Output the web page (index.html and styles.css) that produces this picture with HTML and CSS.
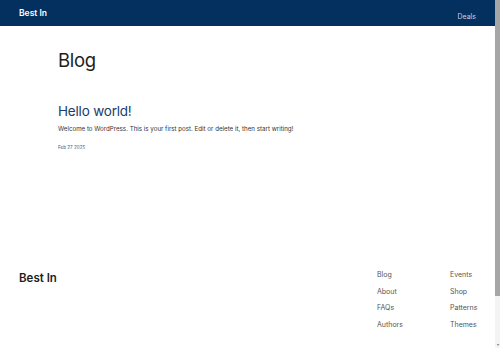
FILE: index.html
```html
<!DOCTYPE html>
<html>
    <head>
        <meta charset="UTF-8" name="viewport" content="width=device-width, initial-scale=1">
        <link rel="stylesheet" href="styles.css">
    </head>
    <body>

        <header class="topbar">
            <a class="brand" href="#">Best In</a>
            <nav class="topnav">
                <a href="#">Deals</a>
            </nav>
        </header>

        <main class="content">
            <h1 class="page-title">Blog</h1>

            <article class="post">
                <h2 class="post-title"><a href="#">Hello world!</a></h2>
                <p class="post-excerpt">Welcome to WordPress. This is your first post. Edit or delete it, then start writing!</p>
                <time class="post-date">Feb 27 2025</time>
            </article>
        </main>

        <footer class="site-footer">
            <div class="footer-brand">Best In</div>
            <div class="footer-links">
                <ul>
                    <li><a href="#">Blog</a></li>
                    <li><a href="#">About</a></li>
                    <li><a href="#">FAQs</a></li>
                    <li><a href="#">Authors</a></li>
                </ul>
                <ul>
                    <li><a href="#">Events</a></li>
                    <li><a href="#">Shop</a></li>
                    <li><a href="#">Patterns</a></li>
                    <li><a href="#">Themes</a></li>
                </ul>
            </div>
        </footer>

        <div class="scrollbar"><div class="scrollbar-thumb"></div><div class="scrollbar-arrow">&#9662;</div></div>

    </body>
</html>
```

FILE: styles.css
```css
body {
    margin: 0;
    padding-right: 5px;
    font-family: Inter, "Noto Sans", sans-serif;
    color: #222;
    background: #fff;
}

a {
    color: inherit;
    text-decoration: none;
}

/* Fake scrollbar on the right edge */
.scrollbar {
    position: fixed;
    top: 0;
    right: 0;
    width: 5px;
    height: 100%;
    background: #f4f4f4;
}

.scrollbar-thumb {
    height: 296px;
    background: #a6a6a6;
}

.scrollbar-arrow {
    position: absolute;
    bottom: 1px;
    left: 0;
    width: 5px;
    font-size: 4px;
    line-height: 5px;
    text-align: center;
    color: #777;
}

/* Top bar */
.topbar {
    display: flex;
    justify-content: space-between;
    align-items: center;
    height: 26px;
    padding: 0 19px;
    background-color: #03305f;
}

.brand {
    color: #fff;
    font-size: 8.5px;
    font-weight: 600;
}

.topnav a {
    color: #c8d3e2;
    font-size: 7px;
}

/* Main */
.content {
    padding: 23px 58px 0;
    height: 213px;
}

.page-title {
    margin: 0;
    font-size: 18.5px;
    font-weight: 400;
    letter-spacing: -0.3px;
    color: #1e1e1e;
}

.post {
    margin-top: 32px;
}

.post-title {
    margin: 0;
    font-size: 13.5px;
    font-weight: 400;
    letter-spacing: -0.2px;
    color: #173e6b;
}

.post-excerpt {
    margin: 6px 0 0;
    font-size: 6.2px;
    color: #333;
}

.post-date {
    display: block;
    margin-top: 13px;
    font-size: 4.6px;
    color: #3d5c80;
}

/* Footer */
.site-footer {
    display: flex;
    justify-content: space-between;
    padding: 8px 22px 60px 19px;
}

.footer-brand {
    font-size: 11.5px;
    font-weight: 600;
    color: #1e1e1e;
    margin-top: 1px;
}

.footer-links {
    display: flex;
    gap: 50px;
}

.footer-links ul {
    list-style: none;
    margin: 0;
    padding: 0;
    width: 23px;
}

.footer-links li {
    font-size: 7px;
    color: #555;
    line-height: 10px;
    margin-bottom: 6.6px;
    white-space: nowrap;
}
```
